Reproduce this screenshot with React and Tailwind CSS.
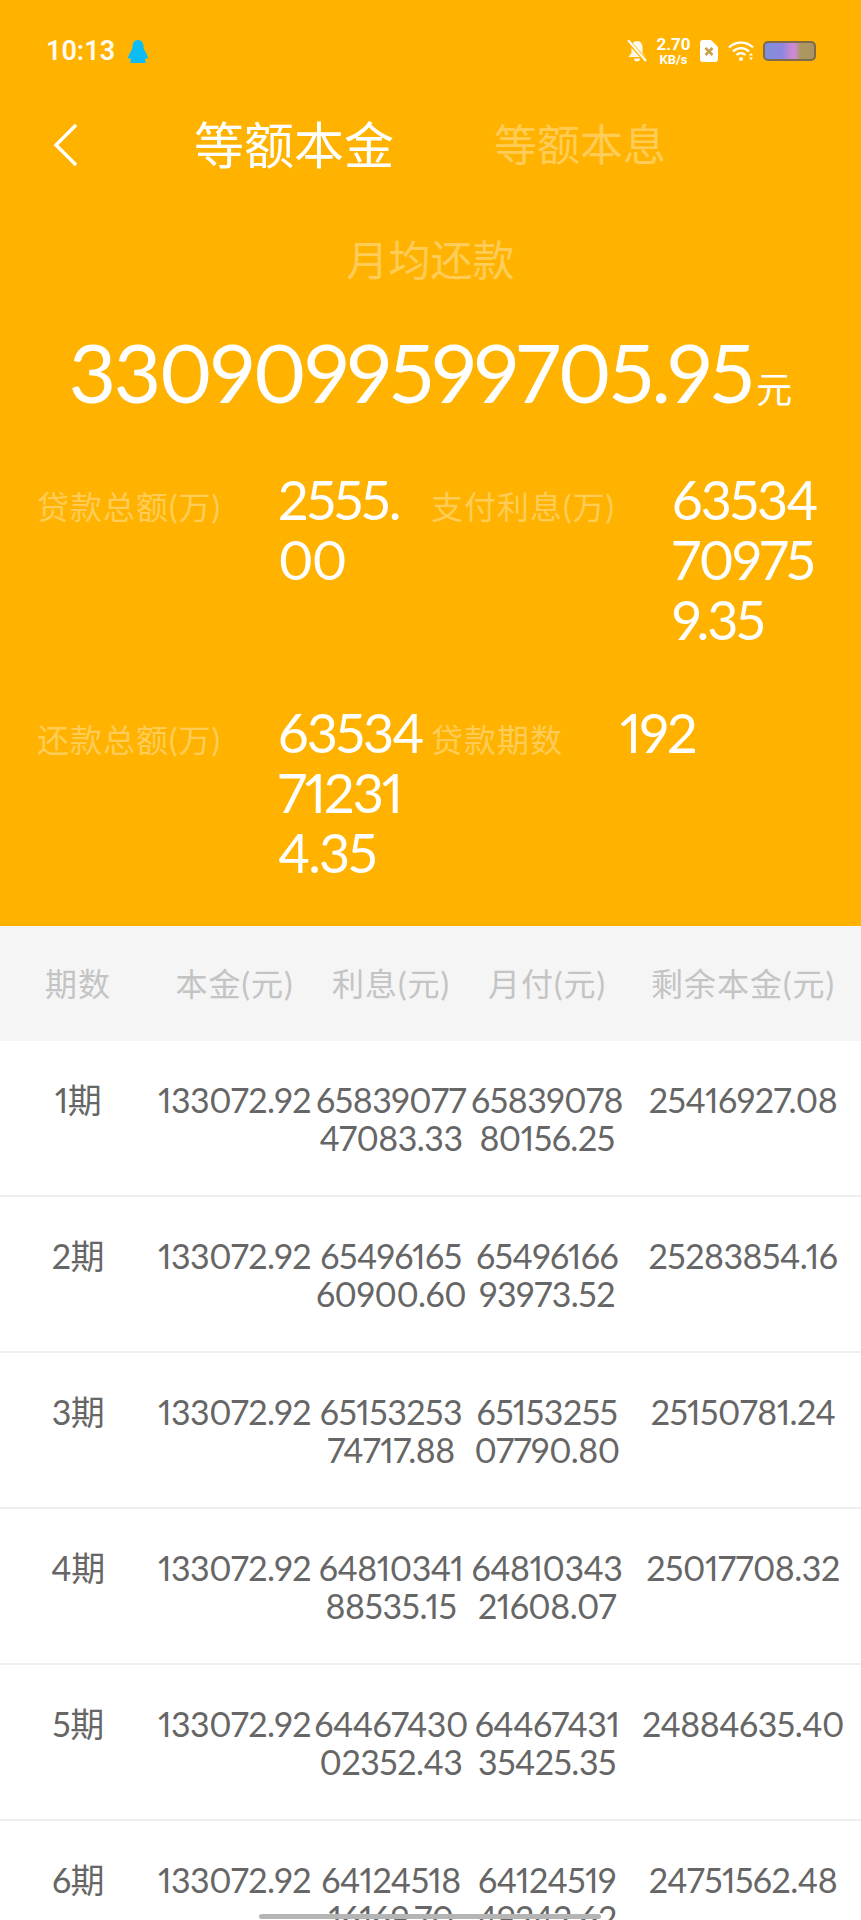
const cjk = '[font-family:Lato,"Noto_Sans_CJK_SC",sans-serif]'

const rows = [
  { term: '1期', principal: '133072.92', interest: '6583907747083.33', monthly: '6583907880156.25', left: '25416927.08' },
  { term: '2期', principal: '133072.92', interest: '6549616560900.60', monthly: '6549616693973.52', left: '25283854.16' },
  { term: '3期', principal: '133072.92', interest: '6515325374717.88', monthly: '6515325507790.80', left: '25150781.24' },
  { term: '4期', principal: '133072.92', interest: '6481034188535.15', monthly: '6481034321608.07', left: '25017708.32' },
  { term: '5期', principal: '133072.92', interest: '6446743002352.43', monthly: '6446743135425.35', left: '24884635.40' },
  { term: '6期', principal: '133072.92', interest: '6412451816169.70', monthly: '6412451949242.62', left: '24751562.48' },
]

const gridCols = 'grid grid-cols-[156px_157px_156px_156px_236px]'

function StatusBar() {
  return (
    <div className="flex h-[100px] items-center justify-between pl-[46px] pr-[45px] pt-[2px]">
      <div className="flex items-center gap-[13px]">
        <span className="font-['Roboto'] text-[27px] font-semibold text-white/95">10:13</span>
        <svg width="20" height="23" viewBox="0 0 20 23">
          <path d="M10 0c4 0 5.500 3 5.500 6.500 0 1.500.5 2.500 1.200 4 .8 1.700 3.300 5.500 3.300 7.500 0 1-1 .5-2 0l-1 2 1 3H2l1-3-1-2c-1 .5-2 1-2 0 0-2 2.500-5.800 3.300-7.500.7-1.500 1.200-2.500 1.200-4C4.500 3 6 0 10 0z" fill="#0bbdf4" />
        </svg>
      </div>
      <div className="flex items-center text-white">
        <svg width="20" height="22" viewBox="0 0 20 22" className="mr-[10px]">
          <path d="M10 1c4 0 5.500 3 5.500 6.500V13l3 4H1.500l3-4V7.500C4.500 4 6 1 10 1zM7 18.500h6c0 2-1 3-3 3s-3-1-3-3z" fill="#fff" fillOpacity="0.92" />
          <path d="M1 1l18 20" stroke="#FFB300" strokeWidth="4" />
          <path d="M1 0l18 21" stroke="#fff" strokeWidth="2" />
        </svg>
        <div className="mr-[10px] flex w-[33px] flex-col items-center font-['Roboto'] font-bold leading-none">
          <span className="text-[17px] leading-[17px]">2.70</span>
          <span className="text-[13px] leading-[13px]">KB/s</span>
        </div>
        <svg width="18" height="22" viewBox="0 0 18 22" className="mr-[10px]">
          <path d="M3 0h8l7 7v12a3 3 0 0 1-3 3H3a3 3 0 0 1-3-3V3a3 3 0 0 1 3-3z" fill="#fff" />
          <path d="M5.500 8l7 7M12.500 8l-7 7" stroke="#c9a24a" strokeWidth="2.600" />
        </svg>
        <svg width="26" height="20" viewBox="0 0 26 20" className="mr-[9px]">
          <path d="M1 6.500c6.500-6.500 17.500-6.500 24 0M5 10.500c4.500-4.500 11.500-4.500 16 0M8.500 14c2.500-2.500 6.500-2.500 9 0" fill="none" stroke="#fff" strokeWidth="2.300" />
          <circle cx="13" cy="18" r="2" fill="#fff" />
          <path d="M23 12l-2 2.500h4zM23 19l-2-2.500h4z" fill="#fff" />
        </svg>
        <div className="h-[20px] w-[53px] rounded-[5px] border-2 border-[#7d6a4a] bg-[linear-gradient(90deg,#7f8fd8_0%,#8f86e0_35%,#c98ad0_55%,#c98ad0_62%,#ad9760_72%,#a99460_100%)]" />
      </div>
    </div>
  )
}

function Stat({ label, value, className }) {
  return (
    <div className={`flex items-start ${className}`}>
      <span className="shrink-0 text-[32px] leading-[74px] tracking-[1px] text-white/35">{label}</span>
      <span className="proportional-nums ml-[57px] min-w-0 flex-1 break-all text-[54px] leading-[60px] tracking-[-2px] text-white">{value}</span>
    </div>
  )
}

// long amounts break after the eighth digit
function Amount({ value }) {
  return (
    <span className="flex flex-col items-center whitespace-nowrap">
      <span>{value.slice(0, 8)}</span>
      <span>{value.slice(8)}</span>
    </span>
  )
}

export default function App() {
  return (
    <div className={`relative h-[1920px] w-[861px] overflow-hidden bg-white ${cjk}`}>
      <section className="h-[926px] bg-[#FFB300]">
        <StatusBar />

        <div className="flex h-[90px] items-center pl-[53px]">
          <svg width="24" height="44" viewBox="0 0 24 44" className="shrink-0">
            <path d="M23 2L3 22l20 20" fill="none" stroke="#fff" strokeWidth="3.400" />
          </svg>
          <span className="ml-[117px] text-[50px] text-white">等额本金</span>
          <span className="ml-[100px] text-[43px] text-white/35">等额本息</span>
        </div>

        <p className="mt-[40px] text-center text-[42px] leading-[60px] text-white/35">月均还款</p>

        <p className="mt-[35px] flex items-baseline justify-center text-[82px] leading-[92px] text-white">
          <span className="proportional-nums tracking-[-2.3px]">3309099599705.95</span>
          <span className="ml-[4px] text-[36px]">元</span>
        </p>

        <div className="mt-[35px] grid grid-cols-[431px_430px] gap-y-[53px]">
          <Stat className="pl-[37px]" label="贷款总额(万)" value="2555.00" />
          <Stat className="pr-[37px]" label="支付利息(万)" value="63534709759.35" />
          <Stat className="pl-[37px]" label="还款总额(万)" value="63534712314.35" />
          <Stat className="pr-[37px]" label="贷款期数" value="192" />
        </div>
      </section>

      <div className={`${gridCols} h-[115px] items-center bg-[#f5f5f5] text-center text-[32px] tracking-[1px] text-[#c4c4c4]`}>
        <span>期数</span>
        <span>本金(元)</span>
        <span>利息(元)</span>
        <span>月付(元)</span>
        <span>剩余本金(元)</span>
      </div>

      {rows.map((row) => (
        <div key={row.term} className={`${gridCols} proportional-nums border-b-2 border-[#eeeeee] pb-[38px] pt-[40px] text-center text-[34px] leading-[38px] tracking-[-0.5px] text-[#666666]`}>
          <span>{row.term}</span>
          <span className="flex justify-center whitespace-nowrap">{row.principal}</span>
          <Amount value={row.interest} />
          <Amount value={row.monthly} />
          <span>{row.left}</span>
        </div>
      ))}

      <div className="absolute bottom-[1px] left-[259px] h-[5px] w-[342px] rounded-full bg-[#b5b5b5]" />
    </div>
  )
}
